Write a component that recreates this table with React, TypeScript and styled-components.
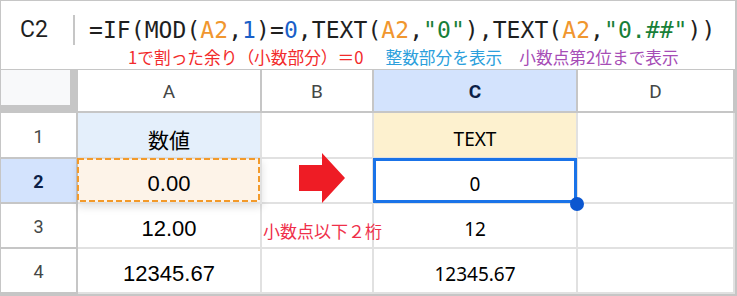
import styled, { createGlobalStyle } from 'styled-components'

const GlobalStyle = createGlobalStyle`
  html, body {
    margin: 0;
    padding: 0;
    background: #ffffff;
  }
`

const Frame = styled.div`
  width: 737px;
  height: 296px;
  box-sizing: border-box;
  border-top: 1px solid #c6c6c6;
  border-left: 1px solid #c6c6c6;
  border-right: 2px solid #c6c6c6;
  border-bottom: 2px solid #c6c6c6;
  background: #ffffff;
  overflow: hidden;
  font-family: 'Liberation Sans', Arial, sans-serif;
`

const FormulaBar = styled.div`
  height: 69px;
  box-sizing: border-box;
  border-bottom: 1px solid #c6c6c6;
  display: flex;
  flex-direction: column;
  padding-top: 10px;
`

const TopLine = styled.div`
  display: flex;
  align-items: center;
  height: 37px;
`

const NameBox = styled.div`
  width: 53px;
  padding-left: 19px;
  font-family: Roboto, 'Liberation Sans', sans-serif;
  font-size: 23px;
  color: #1f1f1f;
`

const Separator = styled.div`
  width: 2px;
  height: 30px;
  background: #c6c6c6;
  margin-right: 14px;
`

const Formula = styled.div`
  font-family: 'DejaVu Sans Mono', 'Liberation Mono', monospace;
  font-size: 23px;
  letter-spacing: 0.07px;
  color: #1f1f1f;
  white-space: nowrap;
`

const Tok = styled.span<{ $c: string }>`
  color: ${(p) => p.$c};
`

const Notes = styled.div`
  display: flex;
  padding-left: 127px;
  font-family: 'Noto Sans CJK JP', 'Noto Sans', sans-serif;
  font-size: 16.7px;
  line-height: 18px;
  white-space: nowrap;
`

const Note = styled.span<{ $c: string; $gap?: number }>`
  color: ${(p) => p.$c};
  margin-right: ${(p) => p.$gap ?? 0}px;
`

const Grid = styled.div`
  display: grid;
  grid-template-columns: 77px 184px 112px 204px 1fr;
  grid-template-rows: 43px 46px 45px 45px 45px;
`

const Corner = styled.div`
  background: #f8f9fa;
  border-right: 8px solid #c6c6c6;
  border-bottom: 8px solid #c6c6c6;
`

const ColHead = styled.div<{ $active?: boolean }>`
  display: flex;
  align-items: center;
  justify-content: center;
  padding-top: 2px;
  box-sizing: border-box;
  border-right: 2px solid #c6c6c6;
  border-bottom: 2px solid #c6c6c6;
  background: ${(p) => (p.$active ? '#d3e3fd' : '#ffffff')};
  color: ${(p) => (p.$active ? '#0b1f48' : '#444746')};
  font-family: Roboto, 'Liberation Sans', sans-serif;
  font-weight: ${(p) => (p.$active ? 700 : 400)};
  font-size: 19px;
`

const RowHead = styled.div<{ $active?: boolean }>`
  display: flex;
  align-items: center;
  justify-content: center;
  padding-top: 2px;
  box-sizing: border-box;
  border-right: 2px solid #c6c6c6;
  border-bottom: 2px solid #c6c6c6;
  background: ${(p) => (p.$active ? '#d3e3fd' : '#ffffff')};
  color: ${(p) => (p.$active ? '#0b1f48' : '#444746')};
  font-family: Roboto, 'Liberation Sans', sans-serif;
  font-weight: ${(p) => (p.$active ? 700 : 400)};
  font-size: 18px;
`

const Cell = styled.div<{ $bg?: string; $font?: string; $size?: number }>`
  position: relative;
  display: flex;
  align-items: center;
  justify-content: center;
  padding-top: 7px;
  box-sizing: border-box;
  border-right: 2px solid #e1e1e1;
  border-bottom: 2px solid #e1e1e1;
  background: ${(p) => p.$bg ?? 'transparent'};
  color: #000000;
  font-family: ${(p) => p.$font ?? "'Liberation Sans', Arial, sans-serif"};
  font-size: ${(p) => p.$size ?? 22}px;
  white-space: nowrap;
`

const SourceCell = styled(Cell)`
  z-index: 1;
  box-shadow: 0 3px 8px rgba(0, 0, 0, 0.12);
`

const Dashes = styled.svg`
  position: absolute;
  left: -1px;
  top: -1px;
  width: calc(100% + 1px);
  height: calc(100% + 1px);
  pointer-events: none;
`

const ActiveCell = styled(Cell)`
  z-index: 2;
  &::after {
    content: '';
    position: absolute;
    left: -1px;
    top: -1px;
    right: -1px;
    bottom: -1px;
    border: 3px solid #1a73e8;
  }
`

const Handle = styled.div`
  position: absolute;
  right: -8px;
  bottom: -9px;
  width: 14px;
  height: 14px;
  border-radius: 50%;
  background: #0b57d0;
  z-index: 3;
`

const ArrowCell = styled(Cell)`
  padding-top: 0;
  padding-left: 9px;
  padding-bottom: 5px;
`

const OverflowNote = styled(Cell)`
  justify-content: flex-start;
  padding-left: 1px;
  padding-top: 9px;
  font-family: 'Noto Sans CJK JP', sans-serif;
  font-size: 17px;
  color: #ef2f4a;
  overflow: visible;
`

const CJK = "'Noto Sans CJK JP', 'Noto Sans', sans-serif"
const CFONT = "'Noto Sans', 'Open Sans', sans-serif"

export default function App() {
  return (
    <>
      <GlobalStyle />
      <Frame>
        <FormulaBar>
          <TopLine>
            <NameBox>C2</NameBox>
            <Separator />
            <Formula>
              =IF(MOD(<Tok $c="#f0962e">A2</Tok>,<Tok $c="#1a5fc8">1</Tok>)=<Tok $c="#1a5fc8">0</Tok>,TEXT(
              <Tok $c="#f0962e">A2</Tok>,<Tok $c="#188038">"0"</Tok>),TEXT(<Tok $c="#f0962e">A2</Tok>,
              <Tok $c="#188038">"0.##"</Tok>))
            </Formula>
          </TopLine>
          <Notes>
            <Note $c="#f22b2b" $gap={22}>1で割った余り（小数部分）＝0</Note>
            <Note $c="#2c9fdc" $gap={17}>整数部分を表示</Note>
            <Note $c="#a64db6">小数点第2位まで表示</Note>
          </Notes>
        </FormulaBar>
        <Grid>
          <Corner />
          <ColHead>A</ColHead>
          <ColHead>B</ColHead>
          <ColHead $active>C</ColHead>
          <ColHead>D</ColHead>

          <RowHead>1</RowHead>
          <Cell $bg="#e4effb" $font={CJK} $size={21}>数値</Cell>
          <Cell />
          <Cell $bg="#fdf1cf" $font={CFONT} $size={19}>TEXT</Cell>
          <Cell />

          <RowHead $active>2</RowHead>
          <SourceCell $bg="#fdf3e8">
            0.00
            <Dashes>
              <rect
                x="1"
                y="1"
                style={{ width: 'calc(100% - 2px)', height: 'calc(100% - 2px)' }}
                fill="none"
                stroke="#f39a2a"
                strokeWidth="2"
                strokeDasharray="6 3"
              />
            </Dashes>
          </SourceCell>
          <ArrowCell>
            <svg width="46" height="50" viewBox="0 0 46 50">
              <path d="M0 12 H23 V0 L46 25 L23 50 V38 H0 Z" fill="#ee1c25" />
            </svg>
          </ArrowCell>
          <ActiveCell $font={CFONT} $size={19}>
            0
            <Handle />
          </ActiveCell>
          <Cell />

          <RowHead>3</RowHead>
          <Cell>12.00</Cell>
          <OverflowNote>小数点以下２桁</OverflowNote>
          <Cell $font={CFONT} $size={19}>12</Cell>
          <Cell />

          <RowHead>4</RowHead>
          <Cell>12345.67</Cell>
          <Cell />
          <Cell $font={CFONT} $size={19}>12345.67</Cell>
          <Cell />
        </Grid>
      </Frame>
    </>
  )
}
